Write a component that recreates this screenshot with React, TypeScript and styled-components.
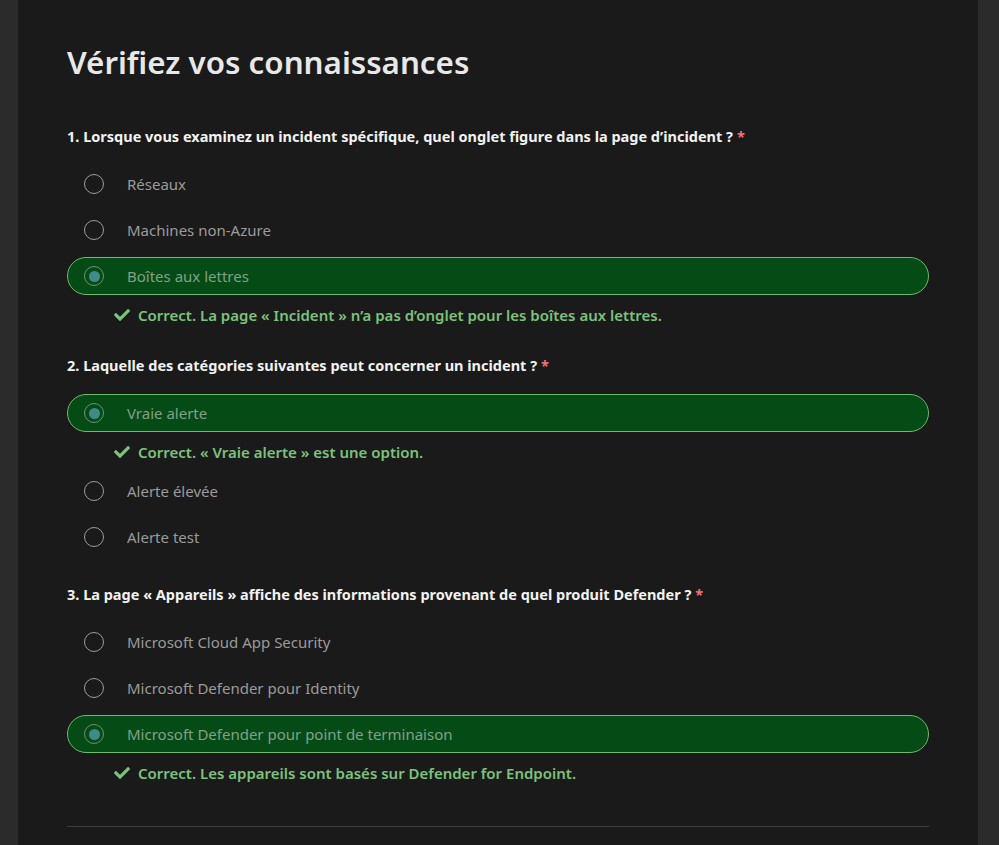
import styled, { createGlobalStyle } from "styled-components";
import { Fragment } from "react";
import { FaCheck } from "react-icons/fa";

const GlobalStyle = createGlobalStyle`
  html, body {
    margin: 0;
    padding: 0;
    background: #2b2b2b;
  }
  body {
    font-family: "Segoe UI", "Noto Sans", "Open Sans", sans-serif;
  }
`;

const Page = styled.div`
  display: flex;
  justify-content: center;
  padding: 0 21px 0 18px;
  min-height: 845px;
  box-sizing: border-box;
`;

const Panel = styled.main`
  width: 960px;
  background: #1a1a1a;
  padding: 41px 49px 0;
  box-sizing: border-box;
`;

const Title = styled.h1`
  margin: 0 0 43px;
  font-size: 31.3px;
  line-height: 42px;
  font-weight: 600;
  color: #e8e8e8;
`;

const Question = styled.section`
  margin-bottom: 28px;
`;

const QuestionTitle = styled.h2`
  margin: 0 0 19px;
  font-size: 14.5px;
  line-height: 20px;
  font-weight: 700;
  color: #f2f2f2;
`;

const Required = styled.span`
  color: #f1707b;
  margin-left: 4px;
`;

const OptionList = styled.div`
  display: flex;
  flex-direction: column;
  gap: 8px;
`;

const Option = styled.label<{ $selected?: boolean }>`
  display: flex;
  align-items: center;
  gap: 23px;
  height: 38px;
  box-sizing: border-box;
  padding-left: 16px;
  border-radius: 19px;
  border: 1px solid ${(p) => (p.$selected ? "#6cbb6c" : "transparent")};
  background: ${(p) => (p.$selected ? "#054b16" : "transparent")};
  color: ${(p) => (p.$selected ? "#83a086" : "#9b9b9b")};
  font-size: 15px;
  cursor: pointer;
`;

const Radio = styled.span<{ $checked?: boolean }>`
  width: 20px;
  height: 20px;
  box-sizing: border-box;
  border-radius: 50%;
  border: 1.5px solid ${(p) => (p.$checked ? "#6f8f78" : "#9c9c9c")};
  display: flex;
  align-items: center;
  justify-content: center;
  flex-shrink: 0;

  &::after {
    content: "";
    display: ${(p) => (p.$checked ? "block" : "none")};
    width: 11px;
    height: 11px;
    border-radius: 50%;
    background: #3e8b8a;
  }
`;

const Feedback = styled.div`
  display: flex;
  align-items: center;
  gap: 8px;
  padding-left: 47px;
  height: 24px;
  color: #7cc27c;
  font-size: 15px;
  font-weight: 600;

  svg {
    width: 16px;
    height: 16px;
  }
`;

const Divider = styled.hr`
  border: none;
  border-top: 1px solid #3d3d3d;
  margin: 41px 0 0;
`;

type Item = { label: string; selected?: boolean; feedback?: string };

const questions: { title: string; items: Item[] }[] = [
  {
    title: "1. Lorsque vous examinez un incident spécifique, quel onglet figure dans la page d’incident ?",
    items: [
      { label: "Réseaux" },
      { label: "Machines non-Azure" },
      {
        label: "Boîtes aux lettres",
        selected: true,
        feedback: "Correct. La page « Incident » n’a pas d’onglet pour les boîtes aux lettres.",
      },
    ],
  },
  {
    title: "2. Laquelle des catégories suivantes peut concerner un incident ?",
    items: [
      { label: "Vraie alerte", selected: true, feedback: "Correct. « Vraie alerte » est une option." },
      { label: "Alerte élevée" },
      { label: "Alerte test" },
    ],
  },
  {
    title: "3. La page « Appareils » affiche des informations provenant de quel produit Defender ?",
    items: [
      { label: "Microsoft Cloud App Security" },
      { label: "Microsoft Defender pour Identity" },
      {
        label: "Microsoft Defender pour point de terminaison",
        selected: true,
        feedback: "Correct. Les appareils sont basés sur Defender for Endpoint.",
      },
    ],
  },
];

export default function App() {
  return (
    <>
      <GlobalStyle />
      <Page>
        <Panel>
          <Title>Vérifiez vos connaissances</Title>
          {questions.map((q) => (
            <Question key={q.title}>
              <QuestionTitle>
                {q.title}
                <Required>*</Required>
              </QuestionTitle>
              <OptionList>
                {q.items.map((item) => (
                  <Fragment key={item.label}>
                    <Option $selected={item.selected}>
                      <Radio $checked={item.selected} />
                      {item.label}
                    </Option>
                    {item.feedback && (
                      <Feedback>
                        <FaCheck />
                        {item.feedback}
                      </Feedback>
                    )}
                  </Fragment>
                ))}
              </OptionList>
            </Question>
          ))}
          <Divider />
        </Panel>
      </Page>
    </>
  );
}
